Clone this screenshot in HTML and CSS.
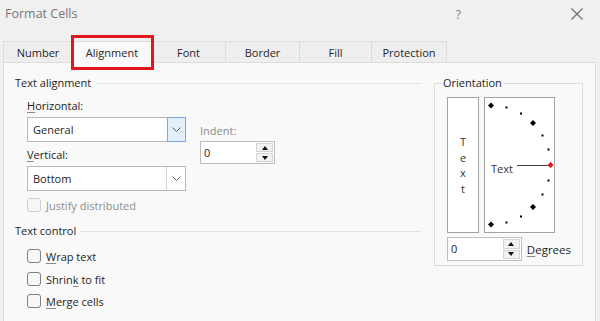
FILE: index.html
```html
<!DOCTYPE html>
<html lang="en">
<head>
  <meta charset="UTF-8">
  <title>Format Cells</title>
  <link rel="stylesheet" href="styles.css">
</head>
<body>

  <div class="titlebar">
    <span class="title">Format Cells</span>
    <span class="help">?</span>
    <svg class="close" width="12" height="12" viewBox="0 0 12 12">
      <path d="M0.5 0.5 L11.5 11.5 M11.5 0.5 L0.5 11.5" stroke="#6a6a6a" stroke-width="1.1" fill="none"/>
    </svg>
  </div>

  <div class="tabs">
    <div class="tab t-number">Number</div>
    <div class="tab t-align active">Alignment</div>
    <div class="tab t-font">Font</div>
    <div class="tab t-border">Border</div>
    <div class="tab t-fill">Fill</div>
    <div class="tab t-prot">Protection</div>
    <div class="mark"></div>
  </div>

  <div class="panel">
    <div class="left">
      <div class="section-head">Text alignment</div>
      <div class="group">
        <div class="align-cols">
          <div class="hv">
            <div class="lbl first"><u>H</u>orizontal:</div>
            <div class="select">
              <span class="select-val">General</span>
              <span class="select-btn hot">
                <svg width="9" height="5" viewBox="0 0 9 5"><path d="M0.5 0.5 L4.5 4.5 L8.5 0.5" stroke="#5a5a5a" fill="none"/></svg>
              </span>
            </div>
            <div class="lbl"><u>V</u>ertical:</div>
            <div class="select">
              <span class="select-val">Bottom</span>
              <span class="select-btn">
                <svg width="9" height="5" viewBox="0 0 9 5"><path d="M0.5 0.5 L4.5 4.5 L8.5 0.5" stroke="#5a5a5a" fill="none"/></svg>
              </span>
            </div>
          </div>
          <div class="indent">
            <div class="lbl muted">Indent:</div>
            <div class="spin">
              <span class="spin-val">0</span>
              <span class="spin-btns">
                <span><i class="up"></i></span>
                <span><i class="down"></i></span>
              </span>
            </div>
          </div>
        </div>
        <div class="check disabled justify"><span class="box"></span>Justify distributed</div>
      </div>

      <div class="section-head control">Text control</div>
      <div class="group">
        <div class="check c1"><span class="box"></span><span><u>W</u>rap text</span></div>
        <div class="check c2"><span class="box"></span><span>Shrin<u>k</u> to fit</span></div>
        <div class="check c3"><span class="box"></span><span><u>M</u>erge cells</span></div>
      </div>
    </div>

    <fieldset class="orient">
      <legend>Orientation</legend>
      <div class="orient-boxes">
        <div class="vtext">
          <span>T</span><span>e</span><span>x</span><span>t</span>
        </div>
        <div class="dial">
          <svg width="69" height="134" viewBox="0 0 69 134">
            <g fill="#000">
              <polygon points="6,4.5 9,7.5 6,10.5 3,7.5"/>
              <polygon points="48,22 51,25 48,28 45,25"/>
              <polygon points="48,106 51,109 48,112 45,109"/>
              <polygon points="6,123.5 9,126.5 6,129.5 3,126.5"/>
              <rect x="20.5" y="8.5" width="2" height="2"/>
              <rect x="35" y="14.5" width="2" height="2"/>
              <rect x="56.5" y="36.5" width="2" height="2"/>
              <rect x="62.5" y="50.5" width="2" height="2"/>
              <rect x="62.5" y="81.5" width="2" height="2"/>
              <rect x="56.5" y="95.5" width="2" height="2"/>
              <rect x="35" y="117.5" width="2" height="2"/>
              <rect x="20.5" y="123.5" width="2" height="2"/>
            </g>
            <polygon points="65.5,64 68.5,67 65.5,70 62.5,67" fill="#e01010"/>
            <line x1="32" y1="67.5" x2="63" y2="67.5" stroke="#404040" stroke-width="1"/>
            <text x="6" y="75" class="dial-text">Text</text>
          </svg>
        </div>
      </div>
      <div class="deg-row">
        <div class="spin deg">
          <span class="spin-val">0</span>
          <span class="spin-btns">
            <span><i class="up"></i></span>
            <span><i class="down"></i></span>
          </span>
        </div>
        <span class="deg-label"><u>D</u>egrees</span>
      </div>
    </fieldset>
  </div>

</body>
</html>
```

FILE: styles.css
```css
html, body {
  margin: 0;
  height: 321px;
  overflow: hidden;
}
body {
  background: #f0f0f0;
  font-family: "Open Sans", "Noto Sans", sans-serif;
  font-size: 11px;
  color: #1e1e1e;
}
u {
  text-decoration-color: #8a8a8a;
  text-underline-offset: 2px;
}

/* title bar */
.titlebar {
  height: 27px;
  display: flex;
  align-items: center;
  padding: 0 17px 0 5px;
  color: #787878;
}
.title {
  flex: 1;
  font-size: 12.5px;
}
.help {
  font-size: 13px;
  margin-right: 110px;
  color: #8a8a8a;
}

/* tabs */
.tabs {
  position: relative;
  display: flex;
  height: 21px;
  margin: 14px 0 0 3px;
}
.tab {
  box-sizing: border-box;
  height: 21px;
  margin-right: -1px;
  border: 1px solid #dcdcdc;
  border-bottom: none;
  background: #eeeeee;
  display: flex;
  align-items: center;
  justify-content: center;
  color: #262626;
}
.tab.active {
  position: relative;
  z-index: 1;
  height: 22px;
  background: #f9f9f9;
}
.t-number { width: 70px; }
.t-align { width: 80px; }
.t-font { width: 75px; }
.t-border { width: 75px; }
.t-fill { width: 73px; }
.t-prot { width: 76px; }
.mark {
  position: absolute;
  z-index: 2;
  left: 68px;
  top: -6px;
  width: 83px;
  height: 35px;
  box-sizing: border-box;
  border: 3px solid #e3151d;
}

/* panel */
.panel {
  box-sizing: border-box;
  height: 259px;
  margin: 0 4px 0 3px;
  padding: 12px 12px 0 11px;
  border: 1px solid #dcdcdc;
  border-bottom: none;
  background: #f9f9f9;
  display: flex;
  align-items: flex-start;
}
.left {
  flex: 1;
}
.section-head {
  display: flex;
  align-items: center;
  height: 16px;
  line-height: 16px;
}
.section-head::after {
  content: "";
  flex: 1;
  height: 1px;
  margin: 1px 0 0 5px;
  background: #e2e2e2;
}
.section-head.control {
  margin-top: 10px;
}
.group {
  padding-left: 12px;
}
.align-cols {
  display: flex;
}
.hv {
  width: 159px;
}
.lbl {
  line-height: 16px;
  margin-top: 5px;
}
.lbl.first {
  margin-top: 7px;
}
.lbl.muted {
  color: #8c8c8c;
  margin-top: 0;
}
.select {
  box-sizing: border-box;
  height: 25px;
  margin-top: 3px;
  display: flex;
  border: 1px solid #b9b9b9;
  background: #fff;
}
.select-val {
  flex: 1;
  padding-left: 5px;
  line-height: 23px;
}
.select-btn {
  width: 18px;
  border-left: 1px solid #d2d2d2;
  display: flex;
  align-items: center;
  justify-content: center;
}
.select-btn.hot {
  width: 17px;
  margin: -1px -1px -1px 0;
  border: 1px solid #77ace2;
  background: #e3effb;
}
.indent {
  margin-left: 14px;
  padding-top: 32px;
}

/* spinner */
.spin {
  box-sizing: border-box;
  width: 75px;
  height: 23px;
  margin-top: 2px;
  display: flex;
  border: 1px solid #bdbdbd;
  background: #fff;
}
.spin-val {
  flex: 1;
  padding-left: 3px;
  line-height: 21px;
}
.spin-btns {
  width: 17px;
  padding: 1px;
  display: flex;
  flex-direction: column;
  gap: 1px;
}
.spin-btns span {
  flex: 1;
  border: 1px solid #d4d4d4;
  background: #f2f2f2;
  display: flex;
  align-items: center;
  justify-content: center;
}
.up, .down {
  width: 0;
  height: 0;
  border-left: 3.5px solid transparent;
  border-right: 3.5px solid transparent;
}
.up { border-bottom: 4px solid #111; }
.down { border-top: 4px solid #111; }

/* checkboxes */
.check {
  display: flex;
  align-items: center;
  gap: 5px;
  height: 16px;
}
.check .box {
  box-sizing: border-box;
  width: 14px;
  height: 14px;
  border: 1px solid #808080;
  border-radius: 3px;
  background: #f7f7f7;
}
.check.disabled {
  color: #8e8e8e;
}
.check.disabled .box {
  border-color: #cfcfcf;
}
.justify { margin-top: 6px; }
.c1 { margin-top: 9px; }
.c2 { margin-top: 7px; }
.c3 { margin-top: 6px; }

/* orientation */
.orient {
  box-sizing: border-box;
  width: 149px;
  margin: 0 0 0 13px;
  padding: 6px 11px 4px 12px;
  border: 1px solid #dcdcdc;
  min-width: 0;
}
.orient legend {
  margin-left: -6px;
  padding: 0 2px;
  line-height: 16px;
}
.orient-boxes {
  display: flex;
  gap: 5px;
}
.vtext, .dial {
  box-sizing: border-box;
  height: 136px;
  border: 1px solid #a3a3a3;
  background: #fff;
}
.vtext {
  width: 32px;
  display: flex;
  flex-direction: column;
  align-items: center;
  justify-content: center;
  line-height: 15.5px;
  color: #333;
}
.dial {
  width: 71px;
}
.dial svg {
  display: block;
}
.dial-text {
  font-family: "Open Sans", sans-serif;
  font-size: 11px;
  fill: #333;
}
.deg-row {
  display: flex;
  align-items: center;
  gap: 5px;
  margin-top: 4px;
}
.spin.deg {
  height: 24px;
  margin-top: 0;
}
.deg-label {
  font-size: 11.5px;
}
```
